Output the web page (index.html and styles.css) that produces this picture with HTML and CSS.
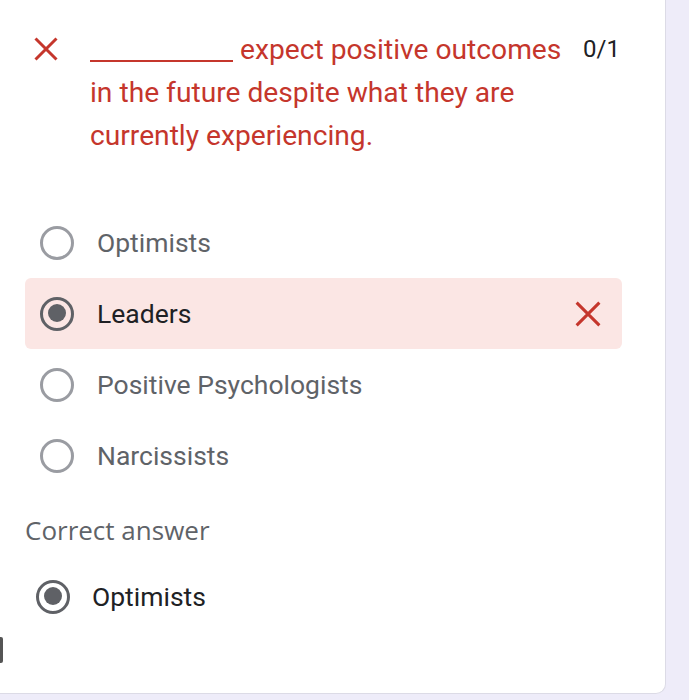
FILE: index.html
```html
<!DOCTYPE html>
<html>
<head>
<meta charset="utf-8">
<link rel="stylesheet" href="styles.css">
</head>
<body>
<div class="page">
  <div class="card">
    <div class="question">
      <svg class="qx" viewBox="0 0 24 24" width="24" height="24"><path d="M1.5 1.5 L22.5 22.5 M22.5 1.5 L1.5 22.5" stroke="#c5362c" stroke-width="3" fill="none"/></svg>
      <div class="qtext"><span class="blank"></span> expect positive outcomes in the future despite what they are currently experiencing.</div>
      <div class="score">0/1</div>
    </div>
    <div class="options">
      <div class="opt"><span class="radio"></span><span class="label">Optimists</span></div>
      <div class="opt wrong"><span class="radio on"></span><span class="label dark">Leaders</span>
        <svg class="ox" viewBox="0 0 24 24" width="26" height="26"><path d="M1.5 1.5 L22.5 22.5 M22.5 1.5 L1.5 22.5" stroke="#c5362c" stroke-width="2.8" fill="none"/></svg>
      </div>
      <div class="opt"><span class="radio"></span><span class="label">Positive Psychologists</span></div>
      <div class="opt"><span class="radio"></span><span class="label">Narcissists</span></div>
    </div>
    <div class="correct-title">Correct answer</div>
    <div class="opt correct"><span class="radio on"></span><span class="label dark">Optimists</span></div>
    <div class="edge"></div>
  </div>
</div>
</body>
</html>
```
FILE: styles.css
```css
html, body { margin: 0; padding: 0; }
body {
  background: #eeecf9;
  font-family: Roboto, "Noto Sans", sans-serif;
  width: 689px;
  height: 700px;
  overflow: hidden;
}
.page { width: 689px; height: 700px; }
.card {
  position: relative;
  width: 666px;
  height: 694px;
  background: #fff;
  border-right: 1px solid #dcdbe6;
  border-bottom: 1px solid #dcdbe6;
  border-bottom-right-radius: 10px;
  box-sizing: border-box;
}
.question {
  display: flex;
  align-items: flex-start;
  padding: 28px 0 0 34px;
}
.qx { flex: none; margin-top: 9px; }
.qtext {
  width: 480px;
  margin-left: 32px;
  color: #c5362c;
  font-size: 28.2px;
  line-height: 43px;
}
.blank {
  display: inline-block;
  width: 143px;
  border-bottom: 2px solid #c5362c;
  vertical-align: baseline;
  margin-bottom: -3px;
}
.score {
  margin-left: 13px;
  color: #202124;
  font-size: 24px;
  line-height: 43px;
}
.options { margin-top: 50px; }
.opt {
  display: flex;
  align-items: center;
  height: 71px;
  margin-left: 25px;
  width: 597px;
  padding-left: 15px;
  box-sizing: border-box;
  border-radius: 6px;
}
.opt.wrong { background: #fbe6e4; }
.radio {
  flex: none;
  width: 34px;
  height: 34px;
  box-sizing: border-box;
  border: 3px solid #9a9ca2;
  border-radius: 50%;
  position: relative;
}
.radio.on { border: 3.5px solid #5f6166; }
.radio.on::after {
  content: "";
  position: absolute;
  left: 4.5px; top: 4.5px;
  width: 18px; height: 18px;
  border-radius: 50%;
  background: #5f6166;
}
.label {
  margin-left: 23px;
  font-size: 26.5px;
  color: #5f6368;
}
.label.dark { color: #202124; }
.ox { margin-left: auto; margin-right: 21px; }
.correct-title {
  margin: 24px 0 0 25px;
  font-family: "Open Sans", Roboto, sans-serif;
  font-size: 26px;
  color: #5f6368;
  line-height: 30px;
}
.opt.correct { margin-left: 21px; margin-top: 16px; }
.opt.correct .label { margin-left: 22px; }
.edge {
  position: absolute;
  left: 0;
  top: 637px;
  width: 3px;
  height: 26px;
  background: #555;
  border-radius: 0 2px 2px 0;
}
```
